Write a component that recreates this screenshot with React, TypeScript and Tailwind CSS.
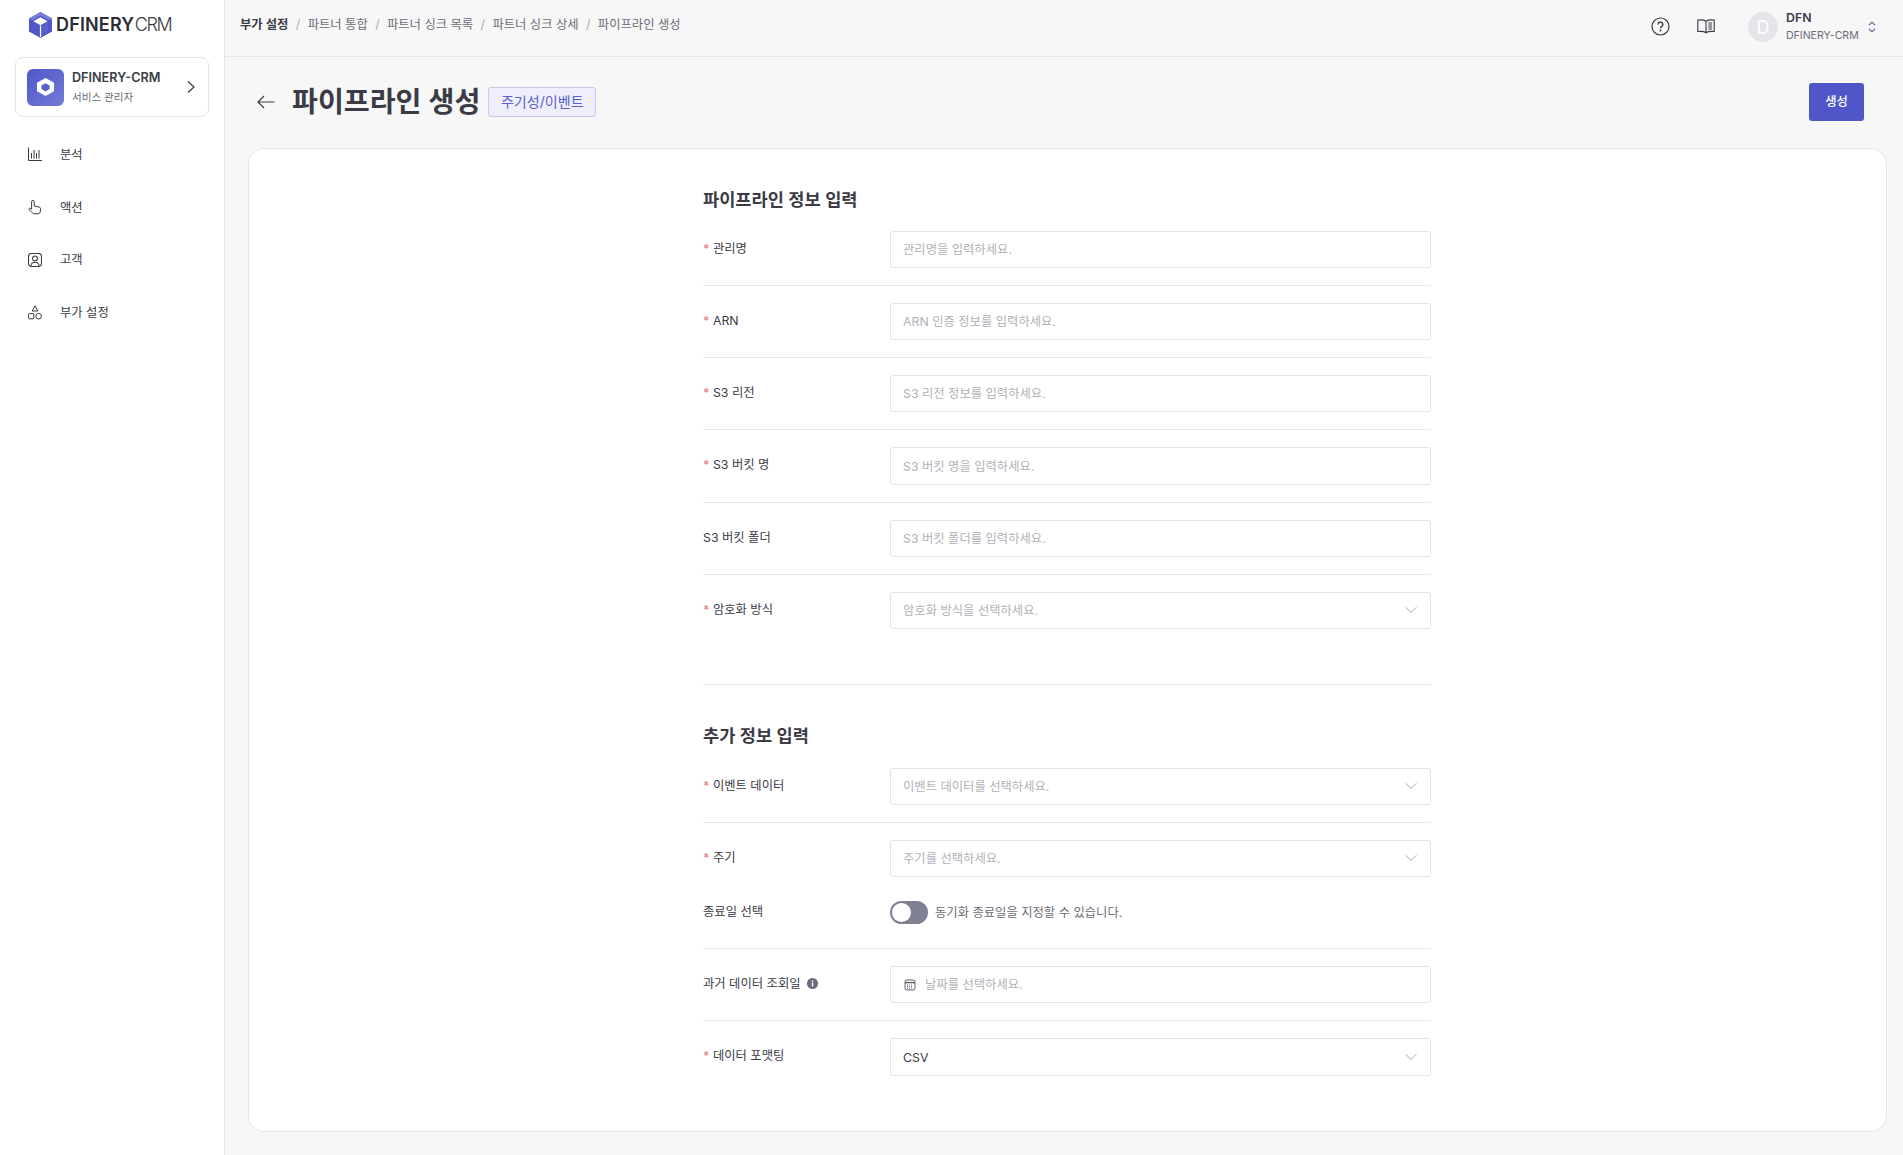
import React from "react";

const FONT = "font-['Inter','Noto_Sans_CJK_KR',sans-serif]";

function LogoMark() {
  return (
    <svg width="23" height="26" viewBox="0 0 23 26">
      <path d="M11.5 0 23 6.5v13L11.5 26 0 19.5v-13z" fill="#4f56c8" />
      <path d="M11.5 0 23 6.5l-3.2 1.8-8.3-4.7-8.3 4.7L0 6.5z" fill="#7a80d8" />
      <path d="M11.5 5.2 18.6 9.2l-7.1 4-7.1-4z" fill="#ffffff" />
      <path d="M4 10.2 10.8 14v9l-6.8-3.9z" fill="#4f56c8" />
      <path d="M19 10.2 12.2 14v9l6.8-3.9z" fill="#5a60cc" />
      <path d="M11.5 13.5V25" stroke="#ffffff" strokeWidth="1.2" />
    </svg>
  );
}

function CardMark() {
  return (
    <svg width="17" height="18" viewBox="0 0 17 18">
      <path d="M8.5 0 17 4.7v8.6L8.5 18 0 13.3V4.7z" fill="#ffffff" />
      <path d="M8.5 5.2 12.6 7.5v3.6L8.5 13.4l-4.1-2.3V7.5z" fill="#5a60cc" />
    </svg>
  );
}

function Req() {
  return <span className="text-[#e08a85] mr-[3.5px] font-medium">*</span>;
}

function Chevron() {
  return (
    <svg width="14" height="8" viewBox="0 0 14 8" fill="none" className="absolute right-[12px] top-1/2 -translate-y-1/2">
      <path d="M1.5 1.2 7 6.5l5.5-5.3" stroke="#a9abb3" strokeWidth="1" />
    </svg>
  );
}

function Field({ text, select, value, icon }: { text: string; select?: boolean; value?: boolean; icon?: boolean }) {
  return (
    <div className="relative w-[541px] h-[37.25px] bg-white border border-[#e2e3e6] rounded-[3px] flex items-center pl-[12px] text-[12.32px]">
      {icon && (
        <svg width="12" height="12" viewBox="0 0 12 12" fill="none" className="mr-[9px] ml-[1px]">
          <rect x="1" y="1" width="10" height="10" rx="2" stroke="#5f6170" strokeWidth="1" />
          <path d="M1 3.6h10" stroke="#5f6170" strokeWidth="1.4" />
          <path d="M3 6h6M3 7.6h6M3 9.2h6" stroke="#5f6170" strokeWidth="0.9" strokeDasharray="1 1" />
        </svg>
      )}
      <span className={`pt-[2px] ${value ? "text-[#3a3b45]" : "text-[#b0b1b8]"}`}>{text}</span>
      {select && <Chevron />}
    </div>
  );
}

function Row({ label, req, last, children, info }: { label: string; req?: boolean; last?: boolean; children: React.ReactNode; info?: boolean }) {
  return (
    <div className={`flex w-full ${last ? "" : "border-b border-[#e9eaec] mb-[17px] pb-[17px]"}`}>
      <div className="w-[187px] pt-[9px] text-[12.32px] leading-[18px] text-[#3a3b45] flex items-start">
        {req && <Req />}
        <span>{label}</span>
        {info && (
          <svg width="11" height="11" viewBox="0 0 11 11" className="ml-[6px] mt-[3px]">
            <circle cx="5.5" cy="5.5" r="5.5" fill="#6a6c7e" />
            <rect x="4.8" y="4.6" width="1.4" height="3.8" fill="#fff" />
            <rect x="4.8" y="2.5" width="1.4" height="1.4" fill="#fff" />
          </svg>
        )}
      </div>
      {children}
    </div>
  );
}

function Nav({ label, children }: { label: string; children: React.ReactNode }) {
  return (
    <div className="flex items-center h-[52.7px] pl-[28px] text-[12.32px] text-[#3a3b45]">
      <span className="w-[32px] flex items-center">{children}</span>
      <span className="pt-[2px]">{label}</span>
    </div>
  );
}

function Crumb({ children, bold }: { children: string; bold?: boolean }) {
  return <span className={bold ? "font-semibold text-[#3a3b45]" : "text-[#6a6c78]"}>{children}</span>;
}

export default function App() {
  const sep = <span className="text-[#a9abb3] mx-[7.4px]">/</span>;
  return (
    <div className={`${FONT} w-[1903px] h-[1155px] flex bg-[#f7f7f8] overflow-hidden`}>
      <aside className="w-[225px] shrink-0 h-full bg-white border-r border-[#e4e5e8]">
        <div className="h-[50px] flex items-center pl-[29px]">
          <LogoMark />
          <span className="ml-[4px] text-[18px] leading-[24px] tracking-[0.15px] font-semibold text-[#2b2c33]">DFINERY</span>
          <span className="ml-[0.5px] text-[18px] leading-[24px] tracking-[-1.4px] font-light text-[#3a3b45]">CRM</span>
        </div>
        <div className="mx-[15px] mt-[7px] h-[60px] w-[194px] border border-[#e4e5e8] rounded-[8px] flex items-center pl-[11px] relative">
          <div className="w-[37px] h-[37px] rounded-[6px] bg-gradient-to-br from-[#4f56c8] to-[#757bd6] flex items-center justify-center">
            <CardMark />
          </div>
          <div className="ml-[8px]">
            <div className="text-[12.64px] leading-[18px] font-semibold text-[#3a3b45]">DFINERY-CRM</div>
            <div className="text-[10.56px] leading-[16px] mt-[3px] text-[#6a6c78]">서비스 관리자</div>
          </div>
          <svg width="10" height="14" viewBox="0 0 10 14" fill="none" className="absolute right-[12px] top-[22px]">
            <path d="M2 1.5 8 7l-6 5.5" stroke="#3a3b45" strokeWidth="1.2" />
          </svg>
        </div>
        <div className="mt-[11px]">
          <Nav label="분석">
            <svg width="14" height="14" viewBox="0 0 14 14" fill="none" stroke="#3a3b45" strokeWidth="1">
              <path d="M.5.5v13h13.5M3.5 6v5.500M6 3v8.500M8.500 6v5.500M11 3v8.500" />
            </svg>
          </Nav>
          <Nav label="액션">
            <svg width="14" height="15" viewBox="0 0 14 15" fill="none" stroke="#3a3b45" strokeWidth="1">
              <path d="M3.6 1.8a1.3 1.3 0 0 1 2.6 0V6l5.2 1.2c.9.2 1.3.9 1.2 1.7l-.5 3.6c-.1.7-.7 1.2-1.4 1.2H6c-.5 0-.9-.2-1.2-.6L1 9.6c-.6-.8.5-2 1.5-1.2l1.1.9z" />
            </svg>
          </Nav>
          <Nav label="고객">
            <svg width="14" height="14" viewBox="0 0 14 14" fill="none" stroke="#3a3b45" strokeWidth="1.1">
              <rect x=".5" y=".5" width="13" height="13" rx="3" />
              <circle cx="7" cy="5.4" r="2.4" />
              <path d="M2.8 13c.4-2.6 2.2-3.8 4.2-3.8s3.8 1.2 4.2 3.8" />
            </svg>
          </Nav>
          <Nav label="부가 설정">
            <svg width="14" height="15" viewBox="0 0 14 15" fill="none" stroke="#3a3b45" strokeWidth="1">
              <path d="M7 .8 9.8 6H4.2z" />
              <rect x=".6" y="8.6" width="5.2" height="5.2" rx=".8" />
              <circle cx="10.6" cy="11.2" r="2.8" />
            </svg>
          </Nav>
        </div>
      </aside>

      <main className="flex-1 flex flex-col min-w-0">
        <header className="h-[57px] shrink-0 border-b border-[#e4e5e8] flex items-center pl-[15px] pr-[27px] text-[12.32px]">
          <div className="flex items-center pb-[5px]">
            <Crumb bold>부가 설정</Crumb>
            {sep}
            <Crumb>파트너 통합</Crumb>
            {sep}
            <Crumb>파트너 싱크 목록</Crumb>
            {sep}
            <Crumb>파트너 싱크 상세</Crumb>
            {sep}
            <Crumb>파이프라인 생성</Crumb>
          </div>
          <div className="ml-auto flex items-center pb-[2px]">
            <svg width="19" height="19" viewBox="0 0 19 19" fill="none" className="-mt-[2px]">
              <circle cx="9.5" cy="9.5" r="8.5" stroke="#3a3b45" strokeWidth="1.2" />
              <path d="M7.2 7.4a2.3 2.3 0 1 1 3.6 1.9c-.8.5-1.3 1-1.3 2" stroke="#3a3b45" strokeWidth="1.5" />
              <circle cx="9.5" cy="13.6" r="1" fill="#3a3b45" />
            </svg>
            <svg width="18" height="15" viewBox="0 0 18 15" fill="none" stroke="#3a3b45" strokeWidth="1.1" className="ml-[27px] -mt-[2px]">
              <path d="M9 2.200C7.500 1 4.500.7.800 1v11.500C4.500 12.200 7.500 12.500 9 13.700c1.500-1.200 4.500-1.500 8.200-1.200V1C13.500.7 10.500 1 9 2.200zM9 2.200v11.500" />
              <path d="M11.300 4h3.800M11.300 6h3.800M11.300 8h3.800M11.300 10h3.800" strokeWidth="1" />
            </svg>
            <div className="ml-[33px] w-[30px] h-[30px] rounded-full bg-[#e4e5e9] text-white text-[18px] flex items-center justify-center">D</div>
            <div className="ml-[8px] w-[72px] whitespace-nowrap">
              <div className="text-[12.32px] leading-[16px] font-semibold text-[#3a3b45]">DFN</div>
              <div className="text-[10.56px] leading-[16px] mt-[2px] text-[#6a6c78]">DFINERY-CRM</div>
            </div>
            <svg width="8" height="12" viewBox="0 0 8 12" fill="none" stroke="#5b4b8a" strokeWidth="1.1" className="ml-[10px]">
              <path d="M1 4.200 4 1.200l3 3M1 7.800l3 3 3-3" />
            </svg>
          </div>
        </header>

        <div className="h-[91px] shrink-0 flex items-center pl-[32px] pr-[39px] pb-[2px]">
          <svg width="18" height="14" viewBox="0 0 18 14" fill="none" stroke="#3a3b45" strokeWidth="1.2">
            <path d="M17.500 7H1M7 1 1 7l6 6" />
          </svg>
          <h1 className="ml-[17px] text-[28.16px] leading-[40px] font-semibold text-[#3a3b45]">파이프라인 생성</h1>
          <span className="ml-[8px] h-[30px] px-[11.5px] flex items-center rounded-[3px] border border-[#c7c9ec] bg-[#eeeffa] text-[14.08px] text-[#5a60cc]">주기성/이벤트</span>
          <button className="ml-auto w-[55px] h-[38px] pt-[2px] rounded-[3px] bg-[#4f56c8] text-white text-[12.32px] font-medium">생성</button>
        </div>

        <section className="ml-[23px] mr-[16px] h-[984px] bg-white border border-[#e4e5e8] rounded-[16px] pl-[454px]">
          <div className="w-[728px] pt-[38px]">
            <h2 className="text-[17.6px] leading-[26px] font-semibold text-[#3a3b45] mb-[17.500px]">파이프라인 정보 입력</h2>
            <Row label="관리명" req><Field text="관리명을 입력하세요." /></Row>
            <Row label="ARN" req><Field text="ARN 인증 정보를 입력하세요." /></Row>
            <Row label="S3 리전" req><Field text="S3 리전 정보를 입력하세요." /></Row>
            <Row label="S3 버킷 명" req><Field text="S3 버킷 명을 입력하세요." /></Row>
            <Row label="S3 버킷 폴더"><Field text="S3 버킷 폴더를 입력하세요." /></Row>
            <Row label="암호화 방식" req last><Field text="암호화 방식을 선택하세요." select /></Row>
            <div className="border-t border-[#e4e5e8] mt-[55px] mb-[37.500px]" />
            <h2 className="text-[17.6px] leading-[26px] font-semibold text-[#3a3b45] mb-[19px]">추가 정보 입력</h2>
            <Row label="이벤트 데이터" req><Field text="이벤트 데이터를 선택하세요." select /></Row>
            <Row label="주기" req last><Field text="주기를 선택하세요." select /></Row>
            <div className="flex w-full items-center border-b border-[#e9eaec] mt-[23.5px] pb-[24px] mb-[17.5px]">
              <div className="w-[187px] text-[12.32px] pt-[1px] text-[#3a3b45]">종료일 선택</div>
              <div className="w-[38px] h-[23px] rounded-full bg-[#7f8092] flex items-center pl-[2px]">
                <div className="w-[19px] h-[19px] rounded-full bg-white" />
              </div>
              <span className="ml-[7px] pt-[2px] text-[12.32px] text-[#6a6c78]">동기화 종료일을 지정할 수 있습니다.</span>
            </div>
            <Row label="과거 데이터 조회일" info><Field text="날짜를 선택하세요." icon /></Row>
            <Row label="데이터 포맷팅" req last><Field text="CSV" select value /></Row>
          </div>
        </section>
      </main>
    </div>
  );
}
